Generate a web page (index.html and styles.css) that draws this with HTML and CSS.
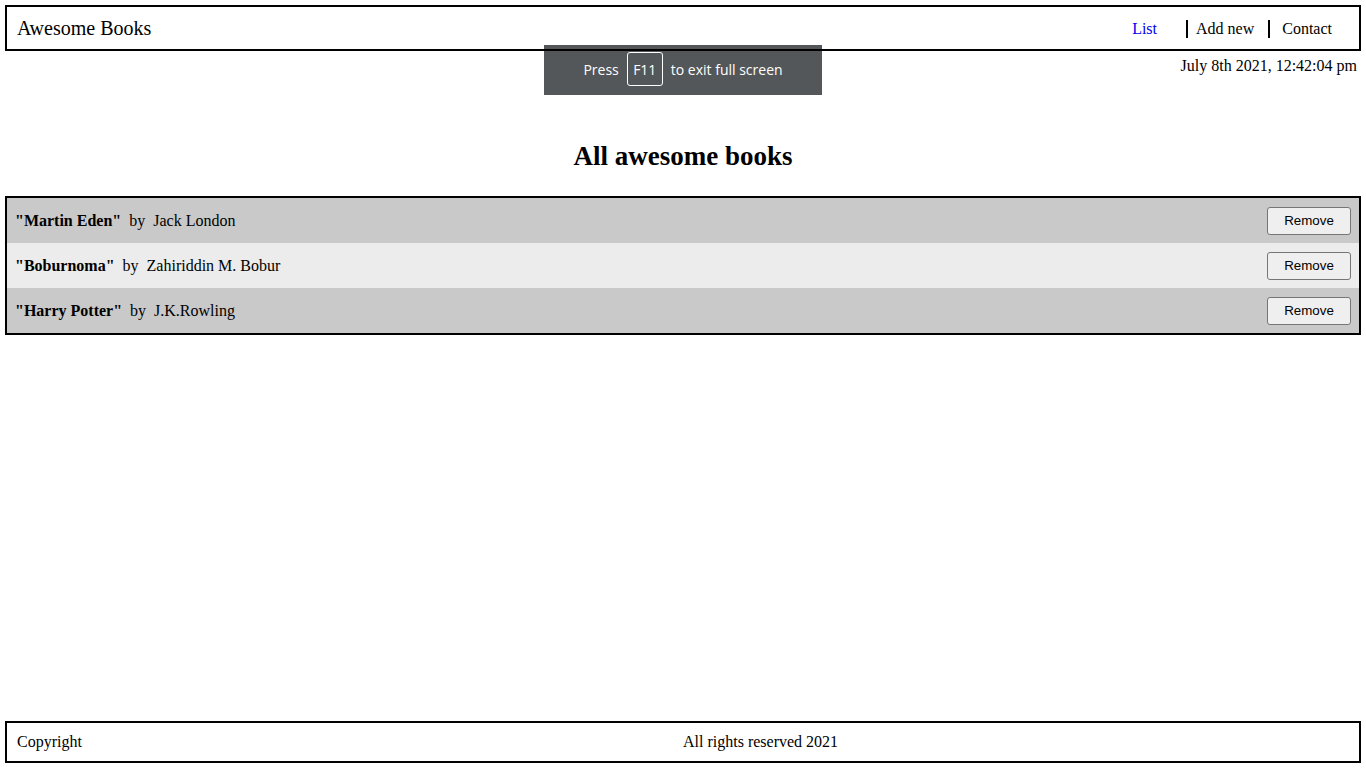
FILE: index.html
```html
<!DOCTYPE html>
<html lang="en">
<head>
<meta charset="utf-8">
<title>Awesome Books</title>
<link rel="stylesheet" href="styles.css">
</head>
<body>
<div class="page">
  <header class="topbar">
    <span class="brand">Awesome Books</span>
    <ul class="nav">
      <li class="nav-item nav-list"><a href="#" class="nav-link active">List</a></li>
      <li class="nav-item nav-add"><a href="#" class="nav-link">Add new</a></li>
      <li class="nav-item nav-contact"><a href="#" class="nav-link">Contact</a></li>
    </ul>
  </header>
  <p class="date">July 8th 2021, 12:42:04 pm</p>
  <h1 class="title">All awesome books</h1>
  <ul class="books">
    <li class="book">
      <div class="book-info"><strong>"Martin Eden"</strong><span>by</span><span>Jack London</span></div>
      <button class="remove">Remove</button>
    </li>
    <li class="book">
      <div class="book-info"><strong>"Boburnoma"</strong><span>by</span><span>Zahiriddin M. Bobur</span></div>
      <button class="remove">Remove</button>
    </li>
    <li class="book">
      <div class="book-info"><strong>"Harry Potter"</strong><span>by</span><span>J.K.Rowling</span></div>
      <button class="remove">Remove</button>
    </li>
  </ul>
  <footer class="footer">
    <span>Copyright</span>
    <span>All rights reserved 2021</span>
  </footer>
</div>
<div class="fs-toast">Press <span class="key">F11</span> to exit full screen</div>
</body>
</html>
```

FILE: styles.css
```css
* { box-sizing: border-box; }
html, body { margin: 0; padding: 0; }
body {
  font-family: "Liberation Serif", "Times New Roman", serif;
  font-size: 16px;
  color: #000;
  background: #fff;
}
.page {
  min-height: 100vh;
  padding: 5px;
  display: flex;
  flex-direction: column;
}
.topbar {
  position: relative;
  z-index: 2;
  height: 46px;
  border: 2px solid #000;
  padding: 1px 10px 0;
  display: flex;
  align-items: center;
  justify-content: space-between;
}
.brand { font-size: 20px; }
.nav {
  list-style: none;
  margin: 0;
  padding: 0 17px 0 0;
  display: flex;
  align-items: center;
}
.nav-item {
  line-height: 18px;
}
.nav-link { color: #000; text-decoration: none; }
.nav-link.active { color: #0000ee; }
.nav-list { padding-right: 29px; }
.nav-add { border-left: 2px solid #000; padding: 0 14px 0 8px; }
.nav-contact { border-left: 2px solid #000; padding-left: 12px; }
.date {
  margin: 6px 0 0;
  padding-right: 4px;
  text-align: right;
  line-height: 18px;
}
.title {
  margin: 67px 0 25px;
  font-size: 27px;
  line-height: 29px;
  text-align: center;
}
.books {
  list-style: none;
  margin: 0;
  padding: 0;
  border: 2px solid #000;
}
.book {
  height: 45px;
  padding: 0 8px;
  display: flex;
  align-items: center;
  justify-content: space-between;
  background: #c9c9c9;
}
.book:nth-child(even) { background: #ececec; }
.book-info { display: flex; gap: 8px; }
.remove {
  width: 84px;
  height: 28px;
  font-family: "Liberation Sans", Arial, sans-serif;
  font-size: 13.33px;
  color: #000;
  background: #efefef;
  border: 1px solid #767676;
  border-radius: 3px;
  padding: 0;
}
.footer {
  margin-top: auto;
  height: 42px;
  border: 2px solid #000;
  padding: 0 10px;
  display: grid;
  grid-template-columns: 1fr 1fr;
  align-items: center;
}
.fs-toast {
  position: absolute;
  top: 45px;
  left: 544px;
  width: 278px;
  height: 50px;
  z-index: 1;
  background: #54575a;
  color: #fff;
  font-family: "Open Sans", "Noto Sans", sans-serif;
  font-size: 14px;
  padding-bottom: 2px;
  display: flex;
  align-items: center;
  justify-content: center;
  gap: 8px;
}
.key {
  display: inline-flex;
  align-items: center;
  justify-content: center;
  width: 36px;
  height: 34px;
  border: 1px solid #fff;
  border-radius: 3px;
}
```
